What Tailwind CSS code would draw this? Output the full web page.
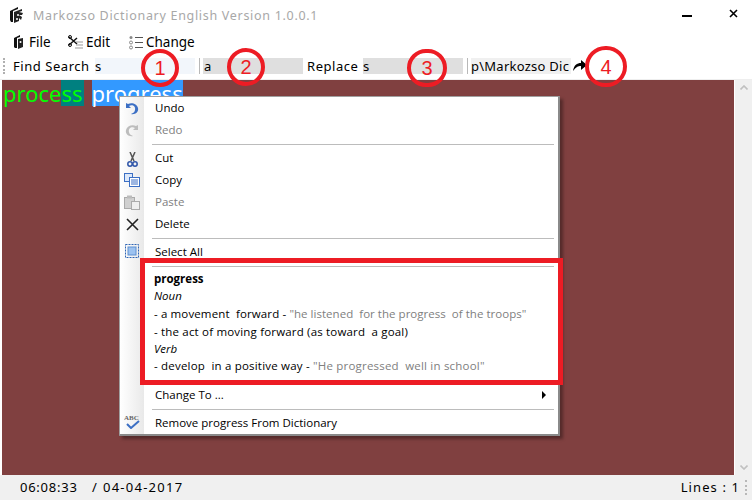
<!DOCTYPE html>
<html lang="en">
<head>
    <meta charset="UTF-8" />
    <title>Markozso Dictionary English Version 1.0.0.1</title>
    <script src="https://cdn.jsdelivr.net/npm/@tailwindcss/browser@4"></script>
</head>
<body class="bg-white">
    <div class="relative w-[752px] h-[500px] overflow-hidden flex flex-col bg-white font-['Noto_Sans',sans-serif] text-black">
    <!-- Title bar -->
    <header class="h-[30px] flex items-center justify-between pl-[10px] pr-[14px]">
        <div class="flex items-center gap-[9px]">
            <svg class="w-[14px] h-[18px]" viewBox="0 0 14 18">
                <path d="M0 5 L8 1 L8 3 L3 5 L3 16 L1 16 L0 14 Z" fill="#111"/>
                <path d="M4 6 L12 3 L12 5 L9 6 L13 7 L12 9 L9 9 L12 11 L11 14 L9 12 L9 15 L4 17 Z" fill="#222"/>
                <circle cx="8" cy="9" r="1" fill="#fff"/><circle cx="7" cy="13" r="1" fill="#fff"/>
            </svg>
            <span class="text-[12.5px] mt-[2px] tracking-[0.7px] text-[#a8a8a8]">Markozso Dictionary English Version 1.0.0.1</span>
        </div>
        <div class="flex items-center gap-[37px]">
            <div class="w-[10px] h-[2px] mt-[2px] bg-black"></div>
            <svg class="w-[9px] h-[9px] mt-[-4px]" viewBox="0 0 9 9"><path d="M1 1 L8 8 M8 1 L1 8" stroke="#000" stroke-width="1.6"/></svg>
        </div>
    </header>

    <!-- Menu bar -->
    <nav class="h-[26px] flex items-center pl-[14px] pb-[2px] text-[13.5px]">
        <svg class="w-[10px] h-[14px] mr-[5px]" viewBox="0 0 10 14"><path d="M0 3 L6 0 L6 2 L3 3 L3 13 L1 13 L0 12 Z" fill="#111"/><path d="M4 4 L9 3 L9 12 L4 14 Z" fill="#222"/><circle cx="6.5" cy="7" r="1" fill="#fff"/></svg>
        <span class="w-[39px]">File</span>
        <svg class="w-[15px] h-[14px] mr-[3px]" viewBox="0 0 15 14"><path d="M1 2 L9 9 M1 10 L9 3" stroke="#111" stroke-width="1.5" fill="none"/><circle cx="2" cy="2" r="1.5" fill="none" stroke="#111"/><circle cx="2" cy="10" r="1.5" fill="none" stroke="#111"/><path d="M8 7 H15 M8 10 H15 M7 13 H15" stroke="#999"/></svg>
        <span class="w-[43px]">Edit</span>
        <svg class="w-[14px] h-[15px] mr-[3px]" viewBox="0 0 14 15"><circle cx="2" cy="2.5" r="1.5" fill="#888"/><circle cx="2" cy="7.5" r="1.5" fill="none" stroke="#888"/><circle cx="2" cy="12.5" r="1.5" fill="none" stroke="#888"/><path d="M6 2.5 H14 M6 7.5 H14 M6 12.5 H14" stroke="#555"/></svg>
        <span>Change</span>
    </nav>

    <!-- Search toolbar -->
    <div class="h-[24px] flex items-center text-[13px] leading-[18px] border-b border-[#eeeeee] pb-[4px]">
        <div class="w-[3px] h-[16px] ml-[3px] mr-[7px] border-l-2 border-dotted border-[#b0b0b0]"></div>
        <span class="w-[82px] tracking-[0.55px]">Find Search</span>
        <div class="w-[100px] h-[16px] leading-[16px] bg-[#f2f6fb] mr-[4px]">s</div>
        <div class="w-px h-[16px] bg-[#b8b8b8] mr-[3px]"></div>
        <div class="w-[100px] h-[16px] leading-[16px] bg-[#dfdfdf] pl-[1px] mr-[4px]">a</div>
        <span class="w-[56px] tracking-[0.55px]">Replace</span>
        <div class="w-[100px] h-[16px] leading-[16px] bg-[#dfdfdf] mr-[4px]">s</div>
        <div class="w-px h-[16px] bg-[#b8b8b8] mr-[3px]"></div>
        <div class="w-[100px] h-[16px] leading-[16px] bg-[#f0f0f0] tracking-[0.25px] whitespace-nowrap overflow-hidden">p\Markozso Dic</div>
        <svg class="w-[14px] h-[13px] ml-[2px]" viewBox="0 0 14 13"><path d="M0 12 C1 6 4 4 8 4 L8 1 L14 6 L8 11 L8 7 C5 7 3 8 0 12 Z" fill="#000"/></svg>
    </div>

    <!-- Editor area -->
    <main class="flex-1 flex pl-[2px]">
        <div class="flex-1 bg-[#804040] pl-[1px]">
            <div class="flex text-[22px] leading-[26px] h-[26px]">
                <span class="text-[#00ff00]">proce</span><span class="text-[#00ff00] bg-[#008080] pr-px">ss</span>
                <span class="w-[8px]"></span>
                <span class="text-white bg-[#3399ff]">progress</span>
            </div>
        </div>
        <aside class="w-[17px] bg-[#f0f0f0] flex flex-col justify-between items-center py-[5px] ml-px">
            <svg class="w-[8px] h-[5px]" viewBox="0 0 8 5"><path d="M0.5 4.5 L4 1 L7.5 4.5" stroke="#c0c0c0" stroke-width="1.6" fill="none"/></svg>
            <svg class="w-[8px] h-[5px]" viewBox="0 0 8 5"><path d="M0.5 0.5 L4 4 L7.5 0.5" stroke="#c0c0c0" stroke-width="1.6" fill="none"/></svg>
        </aside>
    </main>

    <!-- Status bar -->
    <footer class="h-[25px] flex items-center justify-between bg-[#f0f0f0] text-[13px] pl-[20px] pr-[5px]">
        <div class="flex">
            <span class="w-[72px] tracking-[0.75px]">06:08:33</span>
            <span class="w-[11px]">/</span>
            <span class="tracking-[1.25px]">04-04-2017</span>
        </div>
        <div class="flex items-center gap-[5px]">
            <span class="tracking-[1.1px] whitespace-pre">Lines : 1</span>
            <div class="h-[15px] border-l-2 border-dotted border-[#b8b8b8]"></div>
        </div>
    </footer>

    <!-- Context menu -->
    <div class="absolute left-[119px] top-[96px] w-[441px] h-[340px] bg-white border border-[#a0a0a0] border-r-2 border-b-2 border-r-[#8a8a8a] border-b-[#8a8a8a] shadow-[3px_3px_3px_rgba(0,0,0,0.35)] flex text-[11.5px] font-['Open_Sans',sans-serif]">
        <div class="w-[24px] shrink-0 bg-gradient-to-r from-white to-[#e9e9e9] flex flex-col items-center">
            <svg class="w-[14px] h-[13px] mt-[5px] mb-[9px]" viewBox="0 0 14 13"><path d="M1 1 V6 H6 L4 4 C7 2 11 4 10 8 C10 10 8 11 6 12 C10 13 14 10 13 6 C12 2 7 0 3 2 Z" fill="#3c6fc4"/></svg>
            <svg class="w-[14px] h-[13px] mb-[15px]" viewBox="0 0 14 13"><path d="M13 1 V6 H8 L10 4 C7 2 3 4 4 8 C4 10 6 11 8 12 C4 13 0 10 1 6 C2 2 7 0 11 2 Z" fill="#bdbdbd"/></svg>
            <svg class="w-[11px] h-[15px] mb-[6px]" viewBox="0 0 11 15"><path d="M3 0 L7 9 M8 0 L4 9" stroke="#555" stroke-width="1.5"/><circle cx="3" cy="12" r="2.2" fill="none" stroke="#2f55a8" stroke-width="1.5"/><circle cx="8" cy="12" r="2.2" fill="none" stroke="#2f55a8" stroke-width="1.5"/></svg>
            <svg class="w-[16px] h-[14px] mb-[8px]" viewBox="0 0 16 14"><rect x="0.5" y="0.5" width="8" height="8" fill="#dce8fa" stroke="#3c6fc4"/><rect x="5.5" y="4.5" width="10" height="9" fill="#fff" stroke="#3c6fc4"/><path d="M7 7 H14 M7 9 H14 M7 11 H14" stroke="#3c6fc4"/></svg>
            <svg class="w-[16px] h-[15px] mb-[8px]" viewBox="0 0 16 15"><rect x="0.5" y="2.5" width="10" height="11" fill="#d0d0d0" stroke="#aaa"/><rect x="3" y="0.5" width="5" height="3" fill="#bbb"/><rect x="7.5" y="6.5" width="8" height="8" fill="#eee" stroke="#aaa"/></svg>
            <svg class="w-[13px] h-[13px] mb-[13px]" viewBox="0 0 13 13"><path d="M1 1 L12 12 M12 1 L1 12" stroke="#222" stroke-width="1.6"/></svg>
            <svg class="w-[14px] h-[14px]" viewBox="0 0 14 14"><rect x="0.5" y="0.5" width="13" height="13" fill="none" stroke="#2f65b5" stroke-dasharray="2 1"/><rect x="3" y="3" width="8" height="8" fill="#9cc2f0" stroke="#5f8fd0"/></svg>
            <svg class="w-[17px] h-[16px] mt-[155px]" viewBox="0 0 17 16"><text x="0" y="7" font-size="7" font-weight="700" fill="#666" font-family="Liberation Serif">ABC</text><path d="M3 11 L7 15 L15 8" stroke="#3c6fc4" stroke-width="2" fill="none"/></svg>
        </div>
        <div class="flex-1 pl-[11px] pr-[4px]">
            <div class="h-[22px] flex items-center">Undo</div>
            <div class="h-[22px] flex items-center text-[#808080]">Redo</div>
            <div class="h-px bg-[#bcbcbc] ml-[-3px] mt-[3px] mb-[2px]"></div>
            <div class="h-[22px] flex items-center">Cut</div>
            <div class="h-[22px] flex items-center">Copy</div>
            <div class="h-[22px] flex items-center text-[#808080]">Paste</div>
            <div class="h-[22px] flex items-center">Delete</div>
            <div class="h-px bg-[#bcbcbc] ml-[-3px] mt-[3px] mb-[2px]"></div>
            <div class="h-[22px] flex items-center">Select All</div>
            <div class="h-px bg-[#bcbcbc] ml-[-3px] mt-[3px] mb-[2px]"></div>
            <div class="h-[18px] mt-[3px] -ml-px flex items-center font-bold">progress</div>
            <div class="h-[16px] -ml-px flex items-center italic">Noun</div>
            <div class="h-[18px] mt-px -ml-px flex items-center whitespace-pre tracking-[0.13px]">- a movement  forward - <span class="text-[#808080] tracking-[0.03px]">"he listened  for the progress  of the troops"</span></div>
            <div class="h-[17px] -ml-px flex items-center whitespace-pre tracking-[0.18px]">- the act of moving forward (as toward  a goal)</div>
            <div class="h-[17px] -ml-px flex items-center italic">Verb</div>
            <div class="h-[18px] -ml-px flex items-center whitespace-pre tracking-[0.2px]">- develop  in a positive way - <span class="text-[#808080]">"He progressed  well in school"</span></div>
            <div class="h-[22px] mt-[9px] flex items-center justify-between pr-[8px]">
                <span>Change To ...</span>
                <span class="w-0 h-0 border-y-[4px] border-y-transparent border-l-[4px] border-l-black"></span>
            </div>
            <div class="h-px bg-[#bcbcbc] ml-[-3px] mt-[3px] mb-[2px]"></div>
            <div class="h-[22px] flex items-center">Remove progress From Dictionary</div>
        </div>
    </div>

    <!-- Red annotations -->
    <div class="absolute left-[140px] top-[258px] w-[423px] h-[127px] border-[5px] border-[#ed1c24]"></div>
    <div class="absolute left-[141px] top-[49px] w-[38px] h-[38px] rounded-full border-4 border-[#ed1c24] flex items-center justify-center text-[20px] text-[#ed1c24] font-['Liberation_Sans',sans-serif]">1</div>
    <div class="absolute left-[227px] top-[48px] w-[38px] h-[38px] rounded-full border-4 border-[#ed1c24] flex items-center justify-center text-[20px] text-[#ed1c24] font-['Liberation_Sans',sans-serif]">2</div>
    <div class="absolute left-[407px] top-[49px] w-[40px] h-[38px] rounded-full border-4 border-[#ed1c24] flex items-center justify-center text-[20px] text-[#ed1c24] font-['Liberation_Sans',sans-serif]">3</div>
    <div class="absolute left-[585px] top-[46px] w-[42px] h-[41px] rounded-full border-4 border-[#ed1c24] flex items-center justify-center text-[20px] text-[#ed1c24] font-['Liberation_Sans',sans-serif]">4</div>
    </div>
</body>
</html>
